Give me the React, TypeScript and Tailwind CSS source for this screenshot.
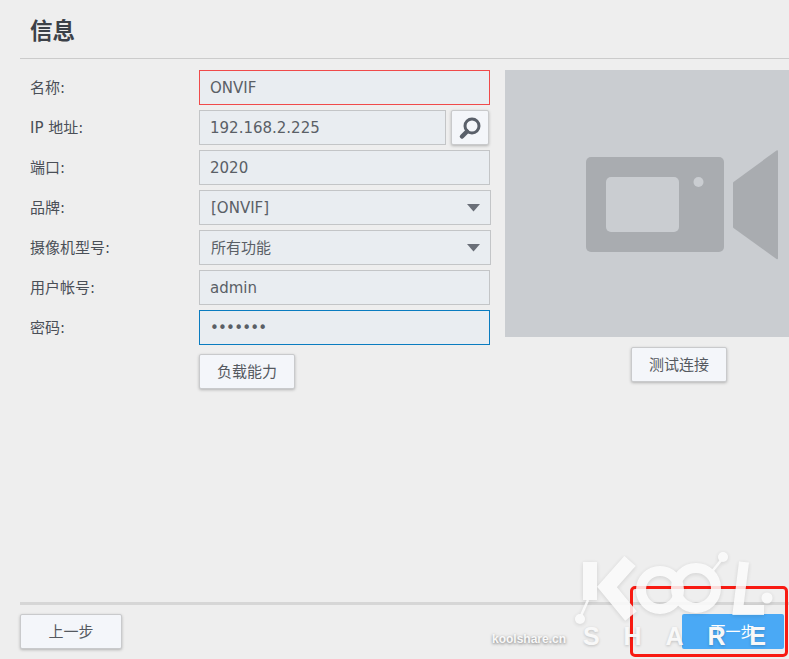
const font = { fontFamily: '"DejaVu Sans", "Noto Sans CJK SC", sans-serif' };

function Label({ children }: { children: React.ReactNode }) {
  return <div className="w-[169px] shrink-0 pt-[1px] text-[15px] text-[#4a4f57]">{children}</div>;
}

function Field({ value, border = "border-[#c3c5c7]", tracking = "" }: { value: string; border?: string; tracking?: string }) {
  return (
    <div className={`flex h-[35px] min-w-0 flex-1 items-center border bg-[#e9edf1] pl-[10px] pt-[1px] text-[15px] text-[#5a5f66] ${border} ${tracking}`}>
      {value}
    </div>
  );
}

function Select({ value }: { value: string }) {
  return (
    <div className="mr-[-1px] flex h-[35px] flex-1 items-center justify-between border border-[#c3c5c7] bg-[#e9edf1] pl-[11px] pr-[10px] pt-[1px] text-[15px] text-[#5a5f66]">
      {value}
      <svg width="13" height="8" viewBox="0 0 13 8"><path d="M0 0H13L6.5 7.5Z" fill="#6a6f78" /></svg>
    </div>
  );
}

function Row({ label, children }: { label: string; children: React.ReactNode }) {
  return (
    <div className="flex h-[35px] items-center">
      <Label>{label}</Label>
      {children}
    </div>
  );
}

function Button({ children, className = "" }: { children: React.ReactNode; className?: string }) {
  return (
    <div className={`flex h-[35px] items-center justify-center rounded-[2px] border border-[#c9cacc] bg-[#f4f6fa] pt-[1px] text-[15px] text-[#55595f] shadow-[0_1px_3px_rgba(0,0,0,0.25)] ${className}`}>
      {children}
    </div>
  );
}

export default function App() {
  return (
    <div className="relative h-[659px] w-[789px] overflow-hidden bg-[#eeeeee]" style={font}>
      <div className="ml-5 flex h-[59px] items-center border-b border-[#cbcbcb] pl-[10px] pt-[5px] text-[22.5px] font-bold text-[#3c4148]">
        信息
      </div>

      <div className="flex pl-[30px] pt-[11px]">
        <div className="flex w-[460px] shrink-0 flex-col gap-[5px]">
          <Row label="名称:"><Field value="ONVIF" border="border-[#f04a4a]" /></Row>
          <Row label="IP 地址:">
            <Field value="192.168.2.225" />
            <Button className="ml-[5px] mr-[1px] w-[38px] shrink-0">
              <svg width="26" height="26" viewBox="0 0 26 26" fill="none" stroke="#5a606a">
                <circle cx="15" cy="11" r="7" strokeWidth="3" />
                <path d="M10 16.500 5 21.500" strokeWidth="4.500" strokeLinecap="round" />
              </svg>
            </Button>
          </Row>
          <Row label="端口:"><Field value="2020" /></Row>
          <Row label="品牌:"><Select value="[ONVIF]" /></Row>
          <Row label="摄像机型号:"><Select value="所有功能" /></Row>
          <Row label="用户帐号:"><Field value="admin" /></Row>
          <Row label="密码:">
            <Field value="•••••••" border="border-[#0a7cc0]" tracking="tracking-[-0.8px]" />
          </Row>
          <div className="mt-[4px] pl-[169px]">
            <Button className="w-[96px]">负载能力</Button>
          </div>
        </div>

        <div className="ml-[15px] flex flex-1 flex-col items-start">
          <div className="flex h-[267px] w-full items-center justify-center bg-[#cacdd1] pl-[70px] pt-[2px]">
            <svg width="192" height="112" viewBox="0 0 192 112">
              <rect x="0" y="8" width="138" height="95" rx="5" fill="#a9acb0" />
              <rect x="20" y="28" width="73" height="55" rx="5" fill="#cacdd1" />
              <circle cx="112.500" cy="33" r="5" fill="#cacdd1" />
              <path d="M147.500 33 190.500 1.500q1.500-1 1.500 1V109q0 2-1.500 1L147.500 79q-.5-.5-.5-1V34q0-.5.5-1Z" fill="#a9acb0" />
            </svg>
          </div>
          <Button className="ml-[126px] mt-[10px] w-[96px]">测试连接</Button>
        </div>
      </div>

      <div className="absolute bottom-0 left-5 right-0 h-[57px] border-t-[3px] border-[#d6d6d6]">
        <div className="flex items-start justify-between pr-[5px] pt-[9px]">
          <Button className="w-[102px]">上一步</Button>
          <div className="flex h-[35px] w-[102px] items-center justify-center rounded-[2px] bg-[#4aa9f5] pt-[1px] text-[15px] text-white">
            下一步
          </div>
        </div>
      </div>

      {/* annotation + watermark overlays */}
      <div className="absolute left-[630px] top-[586px] h-[71px] w-[158px] rounded-[5px] border-[3px] border-[#f81a12]" />

      <svg className="absolute left-[574px] top-[550px] opacity-85 drop-shadow-[0_1px_2px_rgba(0,0,0,0.15)]" width="215" height="85" viewBox="0 0 215 85" fill="none" stroke="#fcfcfc">
        <path d="M16 12V50" strokeWidth="14" />
        <path d="M56 11 33 37 57 66" strokeWidth="15" />
        <path d="M14 50 6 68" strokeWidth="2.500" />
        <circle cx="6" cy="69" r="5" fill="#fcfcfc" stroke="none" />
        <circle cx="86" cy="40" r="19" strokeWidth="10" />
        <circle cx="122" cy="38" r="20" strokeWidth="10" />
        <path d="M136 24 149 8" strokeWidth="2.500" />
        <circle cx="149" cy="7" r="5" fill="#fcfcfc" stroke="none" />
        <path d="M170 12 164 60H190" strokeWidth="10" />
        <circle cx="193" cy="48" r="5.500" fill="#fcfcfc" stroke="none" />
      </svg>
      <div className="absolute left-[583px] top-[623px] flex w-[183px] justify-between text-[25px] font-bold leading-[26px] text-[#f8f8f8] [text-shadow:0_1px_3px_rgba(0,0,0,0.2)]" style={{ fontFamily: '"Liberation Sans", sans-serif' }}>
        <span>S</span><span>H</span><span>A</span><span>R</span><span>E</span>
      </div>
      <div className="absolute left-[492px] top-[631px] text-[12px] font-bold leading-[16px] text-[#f8f8f8] [text-shadow:0_1px_3px_rgba(0,0,0,0.5)]" style={{ fontFamily: '"Liberation Sans", sans-serif' }}>
        koolshare.cn
      </div>
    </div>
  );
}
